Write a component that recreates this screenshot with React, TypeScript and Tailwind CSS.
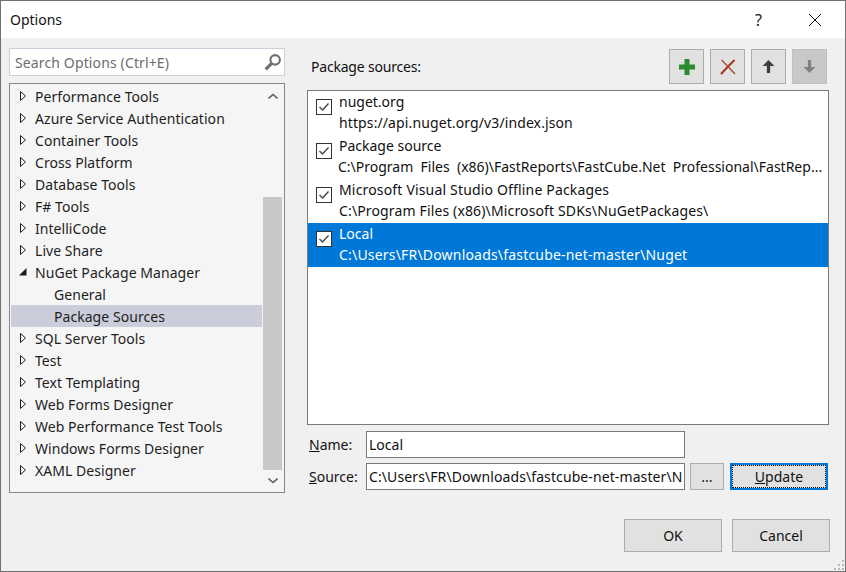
import React from "react";

const font = { fontFamily: '"Noto Sans", "Open Sans", sans-serif' };

const treeTop = [
  "Performance Tools",
  "Azure Service Authentication",
  "Container Tools",
  "Cross Platform",
  "Database Tools",
  "F# Tools",
  "IntelliCode",
  "Live Share",
];
const treeBottom = [
  "SQL Server Tools",
  "Test",
  "Text Templating",
  "Web Forms Designer",
  "Web Performance Test Tools",
  "Windows Forms Designer",
  "XAML Designer",
];

function Arrow() {
  return (
    <svg width="8" height="12" viewBox="0 0 8 12" className="shrink-0 ml-2 mr-2">
      <path d="M1.5 1.5 L6.5 6 L1.5 10.5 Z" fill="none" stroke="#1e1e1e" strokeWidth="1" />
    </svg>
  );
}

function TreeRow({ label }: { label: string }) {
  return (
    <div className="h-[22px] flex items-center whitespace-nowrap">
      <Arrow />
      <span>{label}</span>
    </div>
  );
}

function Check() {
  return (
    <div className="w-4 h-4 bg-white border border-[#333333] flex items-center justify-center shrink-0 ml-2 mt-2">
      <svg width="12" height="10" viewBox="0 0 12 10">
        <path d="M1.5 5 L4.5 8 L10.5 1.5" fill="none" stroke="#444444" strokeWidth="1.4" />
      </svg>
    </div>
  );
}

function Source({
  a,
  b,
  selected,
  aClass = "",
  bClass = "",
}: {
  a: string;
  b: string;
  selected?: boolean;
  aClass?: string;
  bClass?: string;
}) {
  return (
    <div className={`h-11 flex items-start ${selected ? "bg-[#0078d7] text-white" : "text-[#111111]"}`}>
      <Check />
      <div className="ml-[7px] min-w-0">
        <div className={`h-[22px] leading-[21px] whitespace-pre ${aClass}`}>{a}</div>
        <div className={`h-[21px] leading-[19px] whitespace-pre ${bClass}`}>{b}</div>
      </div>
    </div>
  );
}

function ToolButton({ children, disabled }: { children: React.ReactNode; disabled?: boolean }) {
  return (
    <div
      className={`w-[35px] h-[35px] border flex items-center justify-center ${
        disabled ? "bg-[#c8c8c8] border-[#c0c0c0]" : "bg-[#e1e1e1] border-[#adadad]"
      }`}
    >
      {children}
    </div>
  );
}

function ArrowIcon({ down, color }: { down?: boolean; color: string }) {
  return (
    <svg width="13" height="15" viewBox="0 0 12 14" className={down ? "rotate-180" : ""}>
      <path d="M6 1 L11.5 6.5 L8 6.5 L7.5 6 L7.5 13 L4.5 13 L4.5 6 L4 6.5 L0.5 6.5 Z" fill={color} />
    </svg>
  );
}

export default function App() {
  return (
    <div
      className="w-[846px] h-[572px] relative border border-[#707070] bg-[#f0f0f0] text-[14px] text-[#1e1e1e] overflow-hidden flex flex-col"
      style={font}
    >
      <div className="h-[37px] bg-white flex items-center shrink-0">
        <span className="ml-[9px] text-[#111111]">Options</span>
        <div className="ml-auto flex items-center">
          <span className="text-[16px] text-[#222222] mr-[46px]">?</span>
          <svg width="14" height="14" viewBox="0 0 14 14" className="mr-[23px]">
            <path d="M1 1 L13 13 M13 1 L1 13" stroke="#111111" strokeWidth="1" />
          </svg>
        </div>
      </div>

      <div className="flex flex-1 min-h-0">
        <div className="w-[284px] shrink-0 pl-2 pt-[10px] flex flex-col">
          <div className="h-[28px] w-[276px] bg-white border border-[#cccedb] flex items-center pl-[5px] pr-[2px] text-[#6d6d6d]">
            <span className="tracking-[0.13px]">Search Options (Ctrl+E)</span>
            <svg width="19" height="19" viewBox="0 0 18 18" className="ml-auto">
              <circle cx="11.5" cy="6.5" r="4.5" fill="none" stroke="#707070" strokeWidth="2" />
              <path d="M8 10 L2.5 15.5" stroke="#707070" strokeWidth="3" />
            </svg>
          </div>
          <div className="mt-[7px] w-[276px] h-[410px] border border-[#828790] bg-[#f5f5f5] flex">
            <div className="w-[253px] pl-[1px] pt-[1px] tracking-[0.05px]">
              {treeTop.map((t) => (
                <TreeRow key={t} label={t} />
              ))}
              <div className="h-[22px] flex items-center whitespace-nowrap">
                <svg width="8" height="12" viewBox="0 0 8 12" className="shrink-0 ml-2 mr-2">
                  <path d="M0 9.5 L7.5 9.5 L7.5 2 Z" fill="#1e1e1e" />
                </svg>
                <span>NuGet Package Manager</span>
              </div>
              <div className="h-[22px] flex items-center pl-[43px]">General</div>
              <div className="h-[22px] flex items-center pl-[43px] mr-[1px] bg-[#cbcddb]">Package Sources</div>
              {treeBottom.map((t) => (
                <TreeRow key={t} label={t} />
              ))}
            </div>
            <div className="w-[19px] flex flex-col items-center">
              <div className="h-[113px] w-full flex justify-center pt-[9px]">
                <svg width="10" height="7" viewBox="0 0 10 7">
                  <path d="M0.5 5.5 L5 1.5 L9.5 5.5" fill="none" stroke="#606060" strokeWidth="1.6" />
                </svg>
              </div>
              <div className="w-full h-[273px] bg-[#c8c8c8]"></div>
              <div className="flex-1 w-full flex justify-center pt-[7px]">
                <svg width="10" height="7" viewBox="0 0 10 7">
                  <path d="M0.5 1.5 L5 5.5 L9.5 1.5" fill="none" stroke="#606060" strokeWidth="1.6" />
                </svg>
              </div>
            </div>
          </div>
        </div>

        <div className="flex-1 pl-[22px] pt-[11px] flex flex-col relative">
          <div className="flex items-center h-[35px]">
            <span className="ml-[4px] text-[#111111] tracking-[-0.2px]">Package sources:</span>
            <div className="ml-auto mr-[18px] flex gap-[6px]">
              <ToolButton>
                <svg width="18" height="18" viewBox="0 0 18 18">
                  <path d="M6.5 1 H11.5 V6.5 H17 V11.5 H11.5 V17 H6.5 V11.5 H1 V6.5 H6.5 Z" fill="#2b8a2b" />
                </svg>
              </ToolButton>
              <ToolButton>
                <svg width="16" height="16" viewBox="0 0 16 16">
                  <path d="M14.5 1 L8 7.5 L1 15" fill="none" stroke="#b0301c" strokeWidth="2" />
                  <path d="M1.5 1 L8 7.5 L15 15" fill="none" stroke="#a04a3a" strokeWidth="1.4" />
                </svg>
              </ToolButton>
              <ToolButton>
                <ArrowIcon color="#3c3c3c" />
              </ToolButton>
              <ToolButton disabled>
                <ArrowIcon down color="#808080" />
              </ToolButton>
            </div>
          </div>

          <div className="mt-[6px] w-[522px] h-[335px] border border-[#7a7a7a] bg-white overflow-hidden">
            <Source a="nuget.org" b="https://api.nuget.org/v3/index.json" bClass="tracking-[0.11px]" />
            <Source
              a="Package source"
              b="C:\Program  Files  (x86)\FastReports\FastCube.Net  Professional\FastRep..."
              bClass="-ml-px"
            />
            <Source
              a="Microsoft Visual Studio Offline Packages"
              b="C:\Program Files (x86)\Microsoft SDKs\NuGetPackages\"
              aClass="tracking-[0.17px]"
              bClass="tracking-[0.14px]"
            />
            <Source
              a="Local"
              b="C:\Users\FR\Downloads\fastcube-net-master\Nuget"
              bClass="tracking-[0.19px]"
              selected
            />
          </div>

          <div className="mt-[6px] flex items-center h-[27px]">
            <span className="w-[57px] ml-[2px] text-[#111111]">
              <span className="underline">N</span>ame:
            </span>
            <div className="w-[319px] h-[27px] bg-white border border-[#7a7a7a] flex items-center pl-[2px] text-[#111111]">
              Local
            </div>
          </div>

          <div className="mt-[5px] flex items-center h-[27px]">
            <span className="w-[57px] ml-[2px] text-[#111111]">
              <span className="underline">S</span>ource:
            </span>
            <div className="w-[319px] h-[27px] bg-white border border-[#7a7a7a] flex items-center pl-[2px] text-[#111111] overflow-hidden whitespace-nowrap tracking-[0.1px]">
              C:\Users\FR\Downloads\fastcube-net-master\N
            </div>
            <div className="ml-[5px] w-[34px] h-[27px] bg-[#e1e1e1] border border-[#adadad] flex items-center justify-center text-[#111111]">
              ...
            </div>
            <div className="ml-[6px] w-[98px] h-[27px] bg-[#e1e1e1] border-2 border-[#0078d7] flex items-center justify-center text-[#111111]">
              <div className="w-full h-full border border-dotted border-[#111111] flex items-center justify-center">
                <span>
                  <span className="underline">U</span>pdate
                </span>
              </div>
            </div>
          </div>

          <div className="mt-[29px] flex gap-[10px] ml-[317px]">
            <div className="w-[98px] h-[33px] bg-[#e1e1e1] border border-[#adadad] flex items-center justify-center text-[#111111]">
              OK
            </div>
            <div className="w-[98px] h-[33px] bg-[#e1e1e1] border border-[#adadad] flex items-center justify-center text-[#111111]">
              Cancel
            </div>
          </div>
        </div>
      </div>

      <svg width="12" height="12" viewBox="0 0 12 12" className="absolute right-0 bottom-0">
        <path d="M9 1h2v2H9z M5 5h2v2H5z M9 5h2v2H9z M1 9h2v2H1z M5 9h2v2H5z M9 9h2v2H9z" fill="#b8b8b8" />
      </svg>
    </div>
  );
}
